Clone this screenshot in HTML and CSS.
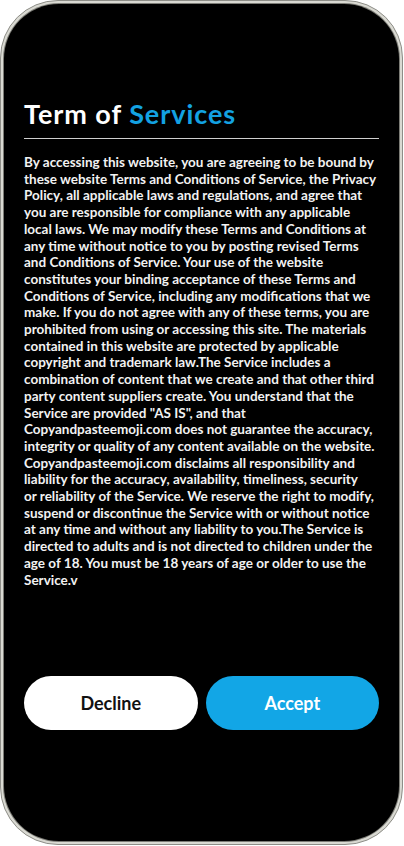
FILE: index.html
```html
<!DOCTYPE html>
<html lang="en">
<head>
<meta charset="utf-8">
<title>Term of Services</title>
<link rel="stylesheet" href="styles.css">
</head>
<body>
<div class="phone">
  <div class="screen">
    <h1 class="title">Term of <span class="accent">Services</span></h1>
    <div class="rule"></div>
    <p class="terms">By accessing this website, you are agreeing to be bound by<br>these website Terms and Conditions of Service, the Privacy<br>Policy, all applicable laws and regulations, and agree that<br>you are responsible for compliance with any applicable<br>local laws. We may modify these Terms and Conditions at<br>any time without notice to you by posting revised Terms<br>and Conditions of Service. Your use of the website<br>constitutes your binding acceptance of these Terms and<br>Conditions of Service, including any modifications that we<br>make. If you do not agree with any of these terms, you are<br>prohibited from using or accessing this site. The materials<br>contained in this website are protected by applicable<br>copyright and trademark law.The Service includes a<br>combination of content that we create and that other third<br>party content suppliers create. You understand that the<br>Service are provided "AS IS", and that<br>Copyandpasteemoji.com does not guarantee the accuracy,<br>integrity or quality of any content available on the website.<br>Copyandpasteemoji.com disclaims all responsibility and<br>liability for the accuracy, availability, timeliness, security<br>or reliability of the Service. We reserve the right to modify,<br>suspend or discontinue the Service with or without notice<br>at any time and without any liability to you.The Service is<br>directed to adults and is not directed to children under the<br>age of 18. You must be 18 years of age or older to use the<br>Service.v</p>
    <div class="actions">
      <button class="btn btn-decline">Decline</button>
      <button class="btn btn-accept">Accept</button>
    </div>
  </div>
</div>
</body>
</html>
```
FILE: styles.css
```css
* { box-sizing: border-box; }
html, body { margin: 0; padding: 0; background: #ffffff; }
body { width: 404px; height: 846px; }
.phone {
  width: 403px;
  height: 845px;
  border-radius: 58px;
  border: 1px solid #8e8e88;
  background: #d9d9d2;
  padding: 3px;
}
.screen {
  height: 100%;
  border-radius: 55px;
  background: #000;
  box-shadow: 0 0 0 1px #7c7c76;
  display: flex;
  flex-direction: column;
  padding: 94px 20px 111px 20px;
  font-family: Lato, "Open Sans", sans-serif;
  color: #fff;
}
.title {
  margin: 0;
  font-size: 27px;
  line-height: 32px;
  font-weight: 700;
  letter-spacing: 0.95px;
  color: #fff;
}
.accent { color: #13a2e2; }
.rule {
  height: 1px;
  background: #cfcfcf;
  margin: 8px 0 15px 0;
}
.terms {
  margin: 0;
  font-size: 13.5px;
  line-height: 16.7px;
  font-weight: 700;
  white-space: nowrap;
  color: #f2f2f2;
}
.actions {
  margin-top: auto;
  display: flex;
  gap: 8px;
}
.btn {
  flex: 1;
  height: 54px;
  border-radius: 27px;
  border: none;
  font-family: Lato, "Open Sans", sans-serif;
  font-size: 18px;
  font-weight: 700;
}
.btn-decline { background: #fff; color: #111; }
.btn-accept { background: #12a6e6; color: #fff; }
```
